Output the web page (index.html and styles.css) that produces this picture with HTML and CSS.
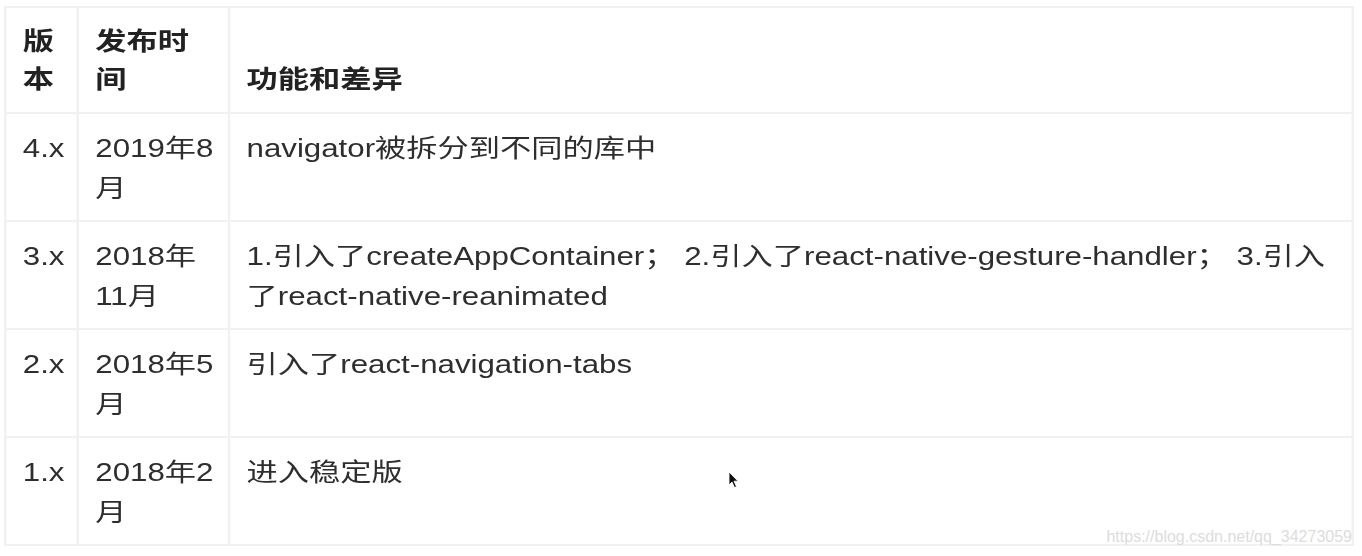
FILE: index.html
```html
<!DOCTYPE html>
<html lang="zh-CN">
<head>
<meta charset="utf-8">
<title>react-navigation 版本</title>
<link rel="stylesheet" href="styles.css">
</head>
<body>
<div class="page">
  <div class="stretch">
    <table class="vtable">
      <thead>
        <tr>
          <th class="c-ver">版本</th>
          <th class="c-date">发布时间</th>
          <th class="c-feat">功能和差异</th>
        </tr>
      </thead>
      <tbody>
        <tr>
          <td>4.x</td>
          <td>2019年8月</td>
          <td>navigator被拆分到不同的库中</td>
        </tr>
        <tr>
          <td>3.x</td>
          <td>2018年11月</td>
          <td>1.引入了createAppContainer； 2.引入了react-native-gesture-handler； 3.引入了react-native-reanimated</td>
        </tr>
        <tr>
          <td>2.x</td>
          <td>2018年5月</td>
          <td>引入了react-navigation-tabs</td>
        </tr>
        <tr>
          <td>1.x</td>
          <td>2018年2月</td>
          <td>进入稳定版</td>
        </tr>
      </tbody>
    </table>
  </div>
  <div class="watermark">https://blog.csdn.net/qq_34273059</div>
  <svg class="cursor" width="12" height="18" viewBox="0 0 12 18" aria-hidden="true">
    <path d="M1 1 L1 14 L4 11 L6.5 16.5 L8.5 15.6 L6 10.2 L10 10.2 Z" fill="#111" stroke="#fff" stroke-width="0.8"/>
  </svg>
</div>
</body>
</html>
```

FILE: styles.css
```css
html, body {
  margin: 0;
  padding: 0;
  background: #ffffff;
}

.page {
  position: relative;
  width: 1362px;
  height: 556px;
  padding: 6px 0 0 4px;
  box-sizing: border-box;
  overflow: hidden;
}

.stretch {
  width: 1080px;
  transform: scaleX(1.25);
  transform-origin: 0 0;
}

.vtable {
  width: 1080px;
  table-layout: fixed;
  border-collapse: collapse;
  font-family: "Liberation Sans", "Noto Sans CJK SC", sans-serif;
  font-size: 25px;
  color: #2e2e2e;
}

.vtable th,
.vtable td {
  border: 2px solid #f1f1f1;
  text-align: left;
  padding: 14px 10px 12px 13px;
  line-height: 40px;
  vertical-align: top;
}

.vtable th {
  font-weight: bold;
  color: #222222;
  vertical-align: bottom;
  padding: 14px 10px 14px 13px;
  line-height: 38px;
}

.c-ver { width: 33px; }
.c-date { width: 96px; }
.c-feat { width: auto; }

.watermark {
  position: absolute;
  right: 10px;
  bottom: 10px;
  font-family: "Liberation Sans", Arial, sans-serif;
  font-size: 16px;
  line-height: 18px;
  color: #dcdcdc;
}

.cursor {
  position: absolute;
  left: 728px;
  top: 471px;
  filter: blur(0.6px);
}
```
